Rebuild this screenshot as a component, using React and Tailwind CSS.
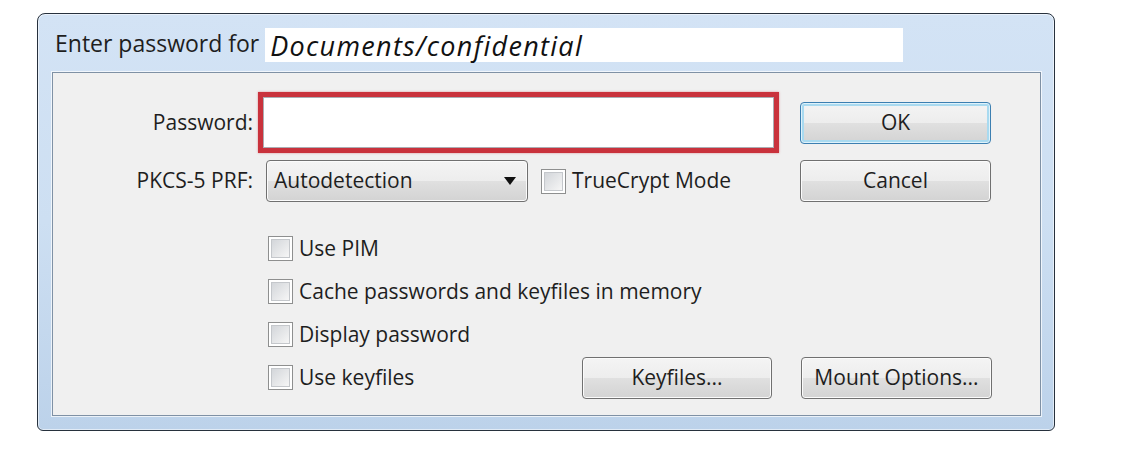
import React from "react";

const font = { fontFamily: '"Open Sans", "Noto Sans", "Liberation Sans", sans-serif' };

function Checkbox() {
  return (
    <div className="w-[25px] h-[25px] border border-[#8e8f8f] bg-white p-[2px] shrink-0">
      <div className="w-full h-full border border-[#c4c7cb] bg-gradient-to-br from-[#d3d6da] to-[#f6f6f6]" />
    </div>
  );
}

function WinButton({ children, def = false, className = "" }) {
  return (
    <div
      className={
        "h-[42px] rounded-[4px] border flex items-center justify-center text-[21px] text-[#1e1e1e] " +
        (def
          ? "border-[#3c7fb1] shadow-[inset_0_0_0_1px_#dff2fb,inset_0_0_0_3px_#a9daf0] bg-[linear-gradient(to_bottom,#f4f4f4_0%,#ededed_50%,#e0e0e0_51%,#d3d3d3_100%)] "
          : "border-[#707070] shadow-[inset_0_0_0_1px_#fbfbfb] bg-[linear-gradient(to_bottom,#f4f4f4_0%,#ededed_50%,#e0e0e0_51%,#d3d3d3_100%)] ") +
        className
      }
    >
      {children}
    </div>
  );
}

function CheckRow({ label, children }) {
  return (
    <div className="flex items-center h-[43px]">
      <div className="w-[215px] shrink-0" />
      <Checkbox />
      <span className="ml-[6px] text-[21px] text-[#1e1e1e]">{label}</span>
      {children}
    </div>
  );
}

export default function App() {
  return (
    <div className="w-[1130px] h-[460px] bg-white pl-[37px] pt-[13px]" style={font}>
      <div className="w-[1018px] h-[418px] border border-[#27313d] rounded-t-[8px] rounded-b-[6px] bg-gradient-to-b from-[#d3e3f5] via-[#cddff2] to-[#bcd2ea] shadow-[inset_0_0_0_1px_rgba(255,255,255,0.55)] pl-[14px] pr-[13px] pt-[14px] pb-[14px] flex flex-col">
        <div className="h-[34px] flex items-center pl-[3px] mb-[10px]">
          <span className="text-[23px] text-[#1e1e1e] leading-none -mt-[3px]">Enter password for</span>
          <div className="ml-[6px] w-[638px] h-[34px] bg-white flex items-center pl-[5px]">
            <span className="italic text-[27px] tracking-[1.3px] text-[#111] leading-none">Documents/confidential</span>
          </div>
        </div>
        <div className="flex-1 border border-[#7f91a5] bg-[#f0f0f0] shadow-[0_0_0_1px_rgba(255,255,255,0.7)] pt-[19px]">
          <div className="flex items-center h-[61px]">
            <div className="w-[213px] shrink-0 pr-[13px] text-right text-[21px] text-[#1e1e1e]">Password:</div>
            <div className="w-[534px] shrink-0">
              <div className="-ml-[8px] w-[521px] h-[61px] border-[5px] border-[#c9323c] shadow-[0_0_2px_rgba(201,50,60,0.5)]">
                <div className="w-full h-full bg-white border border-[#abadb3]" />
              </div>
            </div>
            <WinButton def className="w-[191px]">OK</WinButton>
          </div>
          <div className="flex items-center h-[42px] mt-[7px]">
            <div className="w-[213px] shrink-0 pr-[13px] text-right text-[21px] text-[#1e1e1e]">PKCS-5 PRF:</div>
            <div className="w-[534px] shrink-0 flex items-center">
              <div className="w-[262px] h-[42px] rounded-[4px] border border-[#707070] shadow-[inset_0_0_0_1px_#fbfbfb] bg-[linear-gradient(to_bottom,#f4f4f4_0%,#ededed_50%,#e0e0e0_51%,#d3d3d3_100%)] flex items-center pl-[7px] pr-[11px]">
                <span className="text-[21px] text-[#1e1e1e] flex-1">Autodetection</span>
                <svg width="12" height="8" viewBox="0 0 12 8">
                  <path d="M0 0 L12 0 L6 8 Z" fill="#111" />
                </svg>
              </div>
              <div className="ml-[13px]">
                <Checkbox />
              </div>
              <span className="ml-[6px] text-[21px] text-[#1e1e1e]">TrueCrypt Mode</span>
            </div>
            <WinButton className="w-[191px]">Cancel</WinButton>
          </div>
          <div className="mt-[25px] flex flex-col">
            <CheckRow label="Use PIM" />
            <CheckRow label="Cache passwords and keyfiles in memory" />
            <CheckRow label="Display password" />
            <CheckRow label="Use keyfiles">
              <div className="ml-auto flex items-center">
                <WinButton className="w-[190px]">Keyfiles...</WinButton>
                <WinButton className="w-[191px] ml-[29px] mr-[48px]">Mount Options...</WinButton>
              </div>
            </CheckRow>
          </div>
        </div>
      </div>
    </div>
  );
}
